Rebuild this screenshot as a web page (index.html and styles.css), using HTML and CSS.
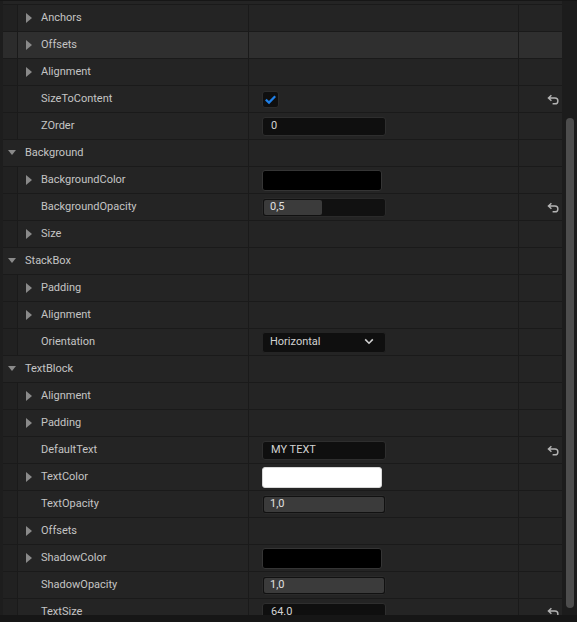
FILE: index.html
```html
<!DOCTYPE html>
<html lang="en">
<head>
  <meta charset="UTF-8">
  <title>Details</title>
  <link rel="stylesheet" href="styles.css">
</head>
<body>

<div class="panel">
  <div class="list">
    <div class="spacer"></div>

    <div class="row sub">
      <div class="name"><span class="indent"></span><span class="arrow-r"></span>Anchors</div>
      <div class="value"></div>
      <div class="reset"></div>
    </div>
    <div class="row sub hover">
      <div class="name"><span class="indent"></span><span class="arrow-r"></span>Offsets</div>
      <div class="value"></div>
      <div class="reset"></div>
    </div>
    <div class="row sub">
      <div class="name"><span class="indent"></span><span class="arrow-r"></span>Alignment</div>
      <div class="value"></div>
      <div class="reset"></div>
    </div>
    <div class="row sub">
      <div class="name"><span class="indent"></span><span class="arrow-r none"></span>SizeToContent</div>
      <div class="value">
        <span class="check">
          <svg width="15" height="15" viewBox="0 0 15 15"><path d="M2.8 7.6 L6 10.6 L12.2 4.2" fill="none" stroke="#1f7fe6" stroke-width="2.2"/></svg>
        </span>
      </div>
      <div class="reset"><svg class="undo" width="12" height="11" viewBox="0 0 12 11"><path d="M4.4 1.2 L1.4 4 L4.4 6.8 M1.4 4 H8 A2.9 2.9 0 0 1 8 9.8 H5.6" fill="none" stroke="#b4b4b4" stroke-width="1.4"/></svg></div>
    </div>
    <div class="row sub">
      <div class="name"><span class="indent"></span><span class="arrow-r none"></span>ZOrder</div>
      <div class="value"><span class="input">0</span></div>
      <div class="reset"></div>
    </div>

    <div class="row cat">
      <div class="name"><span class="arrow-d"></span>Background</div>
      <div class="value"></div>
      <div class="reset"></div>
    </div>
    <div class="row sub">
      <div class="name"><span class="indent"></span><span class="arrow-r"></span>BackgroundColor</div>
      <div class="value"><span class="swatch black"></span></div>
      <div class="reset"></div>
    </div>
    <div class="row sub">
      <div class="name"><span class="indent"></span><span class="arrow-r none"></span>BackgroundOpacity</div>
      <div class="value">
        <span class="slider"><span class="fill" style="width: 48%"></span><span class="num">0,5</span></span>
      </div>
      <div class="reset"><svg class="undo" width="12" height="11" viewBox="0 0 12 11"><path d="M4.4 1.2 L1.4 4 L4.4 6.8 M1.4 4 H8 A2.9 2.9 0 0 1 8 9.8 H5.6" fill="none" stroke="#b4b4b4" stroke-width="1.4"/></svg></div>
    </div>
    <div class="row sub">
      <div class="name"><span class="indent"></span><span class="arrow-r"></span>Size</div>
      <div class="value"></div>
      <div class="reset"></div>
    </div>

    <div class="row cat">
      <div class="name"><span class="arrow-d"></span>StackBox</div>
      <div class="value"></div>
      <div class="reset"></div>
    </div>
    <div class="row sub">
      <div class="name"><span class="indent"></span><span class="arrow-r"></span>Padding</div>
      <div class="value"></div>
      <div class="reset"></div>
    </div>
    <div class="row sub">
      <div class="name"><span class="indent"></span><span class="arrow-r"></span>Alignment</div>
      <div class="value"></div>
      <div class="reset"></div>
    </div>
    <div class="row sub">
      <div class="name"><span class="indent"></span><span class="arrow-r none"></span>Orientation</div>
      <div class="value">
        <span class="combo">Horizontal
          <svg width="10" height="7" viewBox="0 0 10 7"><path d="M1.2 1.4 L5 5.2 L8.8 1.4" fill="none" stroke="#d0d0d0" stroke-width="1.6"/></svg>
        </span>
      </div>
      <div class="reset"></div>
    </div>

    <div class="row cat">
      <div class="name"><span class="arrow-d"></span>TextBlock</div>
      <div class="value"></div>
      <div class="reset"></div>
    </div>
    <div class="row sub">
      <div class="name"><span class="indent"></span><span class="arrow-r"></span>Alignment</div>
      <div class="value"></div>
      <div class="reset"></div>
    </div>
    <div class="row sub">
      <div class="name"><span class="indent"></span><span class="arrow-r"></span>Padding</div>
      <div class="value"></div>
      <div class="reset"></div>
    </div>
    <div class="row sub">
      <div class="name"><span class="indent"></span><span class="arrow-r none"></span>DefaultText</div>
      <div class="value"><span class="input">MY TEXT</span></div>
      <div class="reset"><svg class="undo" width="12" height="11" viewBox="0 0 12 11"><path d="M4.4 1.2 L1.4 4 L4.4 6.8 M1.4 4 H8 A2.9 2.9 0 0 1 8 9.8 H5.6" fill="none" stroke="#b4b4b4" stroke-width="1.4"/></svg></div>
    </div>
    <div class="row sub">
      <div class="name"><span class="indent"></span><span class="arrow-r"></span>TextColor</div>
      <div class="value"><span class="swatch white"></span></div>
      <div class="reset"></div>
    </div>
    <div class="row sub">
      <div class="name"><span class="indent"></span><span class="arrow-r none"></span>TextOpacity</div>
      <div class="value">
        <span class="slider"><span class="fill" style="width: 100%"></span><span class="num">1,0</span></span>
      </div>
      <div class="reset"></div>
    </div>
    <div class="row sub">
      <div class="name"><span class="indent"></span><span class="arrow-r"></span>Offsets</div>
      <div class="value"></div>
      <div class="reset"></div>
    </div>
    <div class="row sub">
      <div class="name"><span class="indent"></span><span class="arrow-r"></span>ShadowColor</div>
      <div class="value"><span class="swatch black"></span></div>
      <div class="reset"></div>
    </div>
    <div class="row sub">
      <div class="name"><span class="indent"></span><span class="arrow-r none"></span>ShadowOpacity</div>
      <div class="value">
        <span class="slider"><span class="fill" style="width: 100%"></span><span class="num">1,0</span></span>
      </div>
      <div class="reset"></div>
    </div>
    <div class="row sub">
      <div class="name"><span class="indent"></span><span class="arrow-r none"></span>TextSize</div>
      <div class="value"><span class="input">64.0</span></div>
      <div class="reset"><svg class="undo" width="12" height="11" viewBox="0 0 12 11"><path d="M4.4 1.2 L1.4 4 L4.4 6.8 M1.4 4 H8 A2.9 2.9 0 0 1 8 9.8 H5.6" fill="none" stroke="#b4b4b4" stroke-width="1.4"/></svg></div>
    </div>
  </div>

  <div class="scrollbar">
    <div class="thumb"></div>
  </div>
</div>

<div class="footer"></div>

</body>
</html>
```

FILE: styles.css
```css
* {
  box-sizing: border-box;
}

body {
  margin: 0;
  padding-top: 1px;
  background: #161616;
  font-family: Roboto, 'Liberation Sans', sans-serif;
  font-size: 11px;
  color: #c4c4c4;
  overflow: hidden;
}

.panel {
  display: flex;
  height: 614px;
  overflow: hidden;
}

.list {
  width: 562px;
  background: #1d1d1d;
  padding-left: 3px;
}

.spacer {
  height: 3px;
  background: #242424;
}

.row {
  display: grid;
  grid-template-columns: 245px 270px 44px;
  height: 27px;
  border-top: 1px solid #1a1a1a;
  background: #242424;
}

.row.hover {
  background: #2f2f2f;
}

.name {
  display: flex;
  align-items: center;
  white-space: nowrap;
  padding-bottom: 1px;
}

.indent {
  align-self: stretch;
  width: 15px;
  margin-bottom: -1px;
  border-right: 1px solid #1a1a1a;
  background: rgba(0, 0, 0, 0.06);
  margin-right: 8px;
}

.arrow-r {
  width: 0;
  height: 0;
  border-left: 6px solid #8a8a8a;
  border-top: 5px solid transparent;
  border-bottom: 5px solid transparent;
  margin-right: 9px;
}

.arrow-r.none {
  visibility: hidden;
}

.arrow-d {
  width: 0;
  height: 0;
  border-top: 5px solid #8a8a8a;
  border-left: 4px solid transparent;
  border-right: 4px solid transparent;
  margin-left: 5px;
  margin-right: 9px;
}

.value {
  display: flex;
  align-items: center;
  border-left: 1px solid #1a1a1a;
  padding-left: 13px;
}

.reset {
  display: flex;
  align-items: center;
  justify-content: flex-end;
  border-left: 1px solid #1a1a1a;
  padding-right: 3px;
}

.check {
  display: flex;
  align-items: center;
  justify-content: center;
  width: 17px;
  height: 17px;
  background: #0f0f0f;
  border: 1px solid #2c2c2c;
  border-radius: 3px;
}

.input {
  display: flex;
  align-items: center;
  width: 124px;
  height: 19px;
  padding-left: 8px;
  padding-bottom: 1px;
  background: #0f0f0f;
  border: 1px solid #2e2e2e;
  border-radius: 3px;
  color: #d2d2d2;
}

.swatch {
  width: 120px;
  height: 21px;
  border-radius: 3px;
}

.swatch.black {
  background: #000;
  border: 1px solid #353535;
}

.swatch.white {
  background: #fff;
  border: 1px solid #d8d8d8;
}

.slider {
  display: grid;
  width: 124px;
  height: 19px;
  padding: 1px;
  background: #111;
  border: 1px solid #2a2a2a;
  border-radius: 3px;
}

.slider .fill,
.slider .num {
  grid-area: 1 / 1;
}

.slider .fill {
  background: #3b3b3b;
  border-radius: 2px;
}

.slider .num {
  align-self: center;
  padding-left: 6px;
  padding-bottom: 1px;
  color: #e0e0e0;
}

.combo {
  display: flex;
  align-items: center;
  justify-content: space-between;
  width: 124px;
  height: 21px;
  padding: 0 11px 1px 7px;
  background: #0f0f0f;
  border: 1px solid #242424;
  border-radius: 3px;
  color: #d2d2d2;
}

.scrollbar {
  width: 15px;
  background: #1c1c1c;
  padding: 117px 3px 7px 4px;
  display: flex;
}

.thumb {
  flex: 1;
  background: #4d4d4d;
  border-radius: 4px;
}

.footer {
  height: 7px;
  background: #161616;
}
```
